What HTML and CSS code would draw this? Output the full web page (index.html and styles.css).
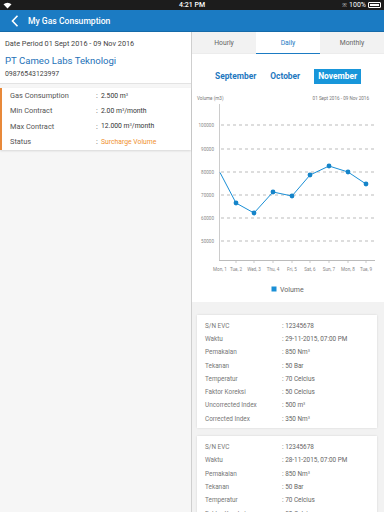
FILE: index.html
```html
<!DOCTYPE html>
<html lang="en">
<head>
    <meta charset="UTF-8">
    <meta name="viewport" content="width=device-width, initial-scale=1.0">
    <title>My Gas Consumption</title>
    <link rel="stylesheet" href="styles.css">
</head>
<body>
    <div class="status-bar">
        <svg class="wifi" width="9" height="7" viewBox="0 0 9 7">
            <path d="M0.5 2.2 A6 6 0 0 1 8.5 2.2 L4.5 6.5 Z" fill="#fff"/>
        </svg>
        <span class="clock">4:21 PM</span>
        <div class="status-right">
            <span class="bt">&#8251;</span>
            <span>100%</span>
            <span class="battery"><span class="battery-fill"></span></span>
        </div>
    </div>

    <div class="header">
        <svg class="back" width="8" height="12" viewBox="0 0 8 12">
            <path d="M6.5 0.8 L1.5 6 L6.5 11.2" fill="none" stroke="#fff" stroke-width="1.6"/>
        </svg>
        <h1>My Gas Consumption</h1>
    </div>

    <div class="main">
        <div class="left">
            <div class="info-card">
                <div class="period">Date Period 01 Sept 2016 - 09 Nov 2016</div>
                <div class="company">PT Cameo Labs Teknologi</div>
                <div class="account">09876543123997</div>
            </div>
            <div class="summary-card">
                <div class="summary-row"><span>Gas Consumption</span><span>:</span><span>2.500 m<sup>3</sup></span></div>
                <div class="summary-row"><span>Min Contract</span><span>:</span><span>2.00 m<sup>3</sup>/month</span></div>
                <div class="summary-row"><span>Max Contract</span><span>:</span><span>12.000 m<sup>3</sup>/month</span></div>
                <div class="summary-row"><span>Status</span><span>:</span><span class="warn">Surcharge Volume</span></div>
            </div>
        </div>

        <div class="right">
            <div class="tabs">
                <div class="tab">Hourly</div>
                <div class="tab active">Daily</div>
                <div class="tab">Monthly</div>
            </div>
            <div class="months">
                <span class="month">September</span>
                <span class="month">October</span>
                <span class="month selected">November</span>
            </div>

            <svg class="chart" width="192" height="214" viewBox="0 0 192 214">
                <g font-family="Roboto, sans-serif" font-size="4.6" fill="#777">
                    <text x="5" y="12">Volume (m3)</text>
                    <text x="177" y="12" text-anchor="end">01 Sept 2016 - 09 Nov 2016</text>
                </g>
                <g stroke="#aaa" stroke-width="0.8" stroke-dasharray="3 3">
                    <line x1="29" y1="37" x2="183" y2="37"/>
                    <line x1="29" y1="61" x2="183" y2="61"/>
                    <line x1="29" y1="84" x2="183" y2="84"/>
                    <line x1="29" y1="107" x2="183" y2="107"/>
                    <line x1="29" y1="130" x2="183" y2="130"/>
                    <line x1="29" y1="153" x2="183" y2="153"/>
                </g>
                <g font-family="Roboto, sans-serif" font-size="4.6" fill="#888" text-anchor="end">
                    <text x="22" y="39">100000</text>
                    <text x="22" y="63">90000</text>
                    <text x="22" y="86">80000</text>
                    <text x="22" y="109">70000</text>
                    <text x="22" y="132">60000</text>
                    <text x="22" y="155">50000</text>
                </g>
                <line x1="27.5" y1="16" x2="27.5" y2="172" stroke="#ccc" stroke-width="1"/>
                <line x1="27" y1="172.5" x2="183" y2="172.5" stroke="#bbb" stroke-width="1.2"/>
                <g stroke="#bbb" stroke-width="0.8">
                    <line x1="44" y1="172" x2="44" y2="175"/>
                    <line x1="62" y1="172" x2="62" y2="175"/>
                    <line x1="81" y1="172" x2="81" y2="175"/>
                    <line x1="100" y1="172" x2="100" y2="175"/>
                    <line x1="118" y1="172" x2="118" y2="175"/>
                    <line x1="137" y1="172" x2="137" y2="175"/>
                    <line x1="156" y1="172" x2="156" y2="175"/>
                    <line x1="174" y1="172" x2="174" y2="175"/>
                </g>
                <g font-family="Roboto, sans-serif" font-size="4.6" fill="#888" text-anchor="middle">
                    <text x="28" y="183">Mon, 1</text>
                    <text x="44" y="183">Tue, 2</text>
                    <text x="62" y="183">Wed, 3</text>
                    <text x="81" y="183">Thu, 4</text>
                    <text x="100" y="183">Fri, 5</text>
                    <text x="118" y="183">Sat, 6</text>
                    <text x="137" y="183">Sun, 7</text>
                    <text x="156" y="183">Mon, 8</text>
                    <text x="174" y="183">Tue, 9</text>
                </g>
                <polyline points="28,84.5 44,115 62,125 81,104 100,108 118,87 137,78 156,84 174,96"
                          fill="none" stroke="#1a8fd6" stroke-width="1"/>
                <g fill="#1584c9">
                    <circle cx="44" cy="115" r="2.4"/>
                    <circle cx="62" cy="125" r="2.4"/>
                    <circle cx="81" cy="104" r="2.4"/>
                    <circle cx="100" cy="108" r="2.4"/>
                    <circle cx="118" cy="87" r="2.4"/>
                    <circle cx="137" cy="78" r="2.4"/>
                    <circle cx="156" cy="84" r="2.4"/>
                    <circle cx="174" cy="96" r="2.4"/>
                </g>
                <rect x="79.5" y="198.5" width="5" height="5" fill="#1a8fd6"/>
                <text x="88" y="203.6" font-family="Roboto, sans-serif" font-size="7" fill="#666">Volume</text>
            </svg>

            <div class="records">
                <div class="record">
                    <div class="record-row"><span>S/N EVC</span><span>: 12345678</span></div>
                    <div class="record-row"><span>Waktu</span><span>: 29-11-2015, 07:00 PM</span></div>
                    <div class="record-row"><span>Pemakaian</span><span>: 850 Nm<sup>3</sup></span></div>
                    <div class="record-row"><span>Tekanan</span><span>: 50 Bar</span></div>
                    <div class="record-row"><span>Temperatur</span><span>: 70 Celcius</span></div>
                    <div class="record-row"><span>Faktor Koreksi</span><span>: 50 Celcius</span></div>
                    <div class="record-row"><span>Uncorrected Index</span><span>: 500 m<sup>3</sup></span></div>
                    <div class="record-row"><span>Corrected Index</span><span>: 350 Nm<sup>3</sup></span></div>
                </div>
                <div class="record">
                    <div class="record-row"><span>S/N EVC</span><span>: 12345678</span></div>
                    <div class="record-row"><span>Waktu</span><span>: 28-11-2015, 07:00 PM</span></div>
                    <div class="record-row"><span>Pemakaian</span><span>: 850 Nm<sup>3</sup></span></div>
                    <div class="record-row"><span>Tekanan</span><span>: 50 Bar</span></div>
                    <div class="record-row"><span>Temperatur</span><span>: 70 Celcius</span></div>
                    <div class="record-row"><span>Faktor Koreksi</span><span>: 50 Celcius</span></div>
                    <div class="record-row"><span>Uncorrected Index</span><span>: 500 m<sup>3</sup></span></div>
                    <div class="record-row"><span>Corrected Index</span><span>: 350 Nm<sup>3</sup></span></div>
                </div>
            </div>
        </div>
    </div>
</body>
</html>
```

FILE: styles.css
```css
* {
    box-sizing: border-box;
}
html, body {
    margin: 0;
    height: 100%;
    overflow: hidden;
}
body {
    font-family: Roboto, "Noto Sans", sans-serif;
    background-color: #f5f5f5;
    color: #444;
}
sup {
    font-size: 60%;
    line-height: 0;
    vertical-align: 0.5em;
}

/* status bar */
.status-bar {
    height: 10px;
    background-color: #1c1c1c;
    color: #fff;
    font-size: 7px;
    display: flex;
    align-items: center;
    justify-content: center;
    position: relative;
    padding: 0 4px;
}
.wifi {
    position: absolute;
    left: 3px;
    top: 2px;
}
.clock {
    font-weight: 500;
}
.status-right {
    position: absolute;
    right: 3px;
    top: 0;
    height: 10px;
    display: flex;
    align-items: center;
    gap: 2px;
}
.bt {
    font-size: 6px;
    color: #ccc;
}
.battery {
    width: 13px;
    height: 6px;
    border: 1px solid #fff;
    border-radius: 1px;
    padding: 1px;
    display: flex;
}
.battery-fill {
    flex: 1;
    background-color: #fff;
}

/* header */
.header {
    height: 22px;
    background-color: #1b7bc3;
    border-bottom: 1px solid #156aa9;
    display: flex;
    align-items: center;
    padding-left: 11px;
}
.header h1 {
    margin: 0 0 0 9px;
    font-size: 8.6px;
    font-weight: 500;
    color: #fff;
}

/* layout */
.main {
    display: flex;
    height: 480px;
}
.left {
    width: 192px;
    border-right: 1px solid #cfcfcf;
    background-color: #f6f6f6;
}
.right {
    width: 192px;
    background-color: #fff;
}

/* left panel */
.info-card {
    background-color: #fff;
    padding: 7px 5px 4px;
    border-bottom: 1px solid #e3e3e3;
}
.period {
    font-size: 7.3px;
    color: #444;
    line-height: 10px;
}
.company {
    font-size: 9.6px;
    color: #1e72b8;
    line-height: 14px;
    margin-top: 5px;
}
.account {
    font-size: 6.9px;
    color: #444;
    line-height: 10px;
    margin-top: 1px;
}
.summary-card {
    background-color: #fff;
    border-left: 2px solid #e8893a;
    margin-top: 4px;
    padding: 0 0 1px 8px;
    box-shadow: 0 1px 2px rgba(0, 0, 0, 0.12);
}
.summary-row {
    display: grid;
    grid-template-columns: 86px 5px auto;
    font-size: 7.4px;
    color: #555;
    height: 15.3px;
    align-items: center;
}
.summary-row span:last-child {
    color: #333;
    font-size: 6.8px;
}
.summary-row .warn {
    color: #f0902e !important;
}

/* tabs */
.tabs {
    display: flex;
    height: 22px;
}
.tab {
    flex: 1;
    display: flex;
    align-items: center;
    justify-content: center;
    font-size: 6.8px;
    color: #666;
    background-color: #f2f2f2;
    border-bottom: 1px solid #ececec;
}
.tab.active {
    background-color: #fff;
    color: #1b7bc3;
    border-bottom: 1px solid #1b7bc3;
}

/* months */
.months {
    display: flex;
    justify-content: center;
    align-items: center;
    gap: 14px;
    padding: 15px 0 4px 0;
}
.month {
    font-size: 8.4px;
    font-weight: 700;
    color: #1e78c0;
    line-height: 15px;
}
.month.selected {
    background-color: #1896da;
    color: #fff;
    padding: 0 4px;
}

.chart {
    display: block;
}

/* records */
.records {
    background-color: #f2f2f2;
    padding: 13px 7px 0 5px;
    display: flex;
    flex-direction: column;
    gap: 8px;
}
.record {
    background-color: #fff;
    padding: 4px 0 3px 8px;
    box-shadow: 0 0 2px rgba(0, 0, 0, 0.12);
}
.record-row {
    display: grid;
    grid-template-columns: 77px auto;
    font-size: 6.4px;
    color: #777;
    height: 13.3px;
    align-items: center;
}
.record-row span:last-child {
    color: #666;
}
```
